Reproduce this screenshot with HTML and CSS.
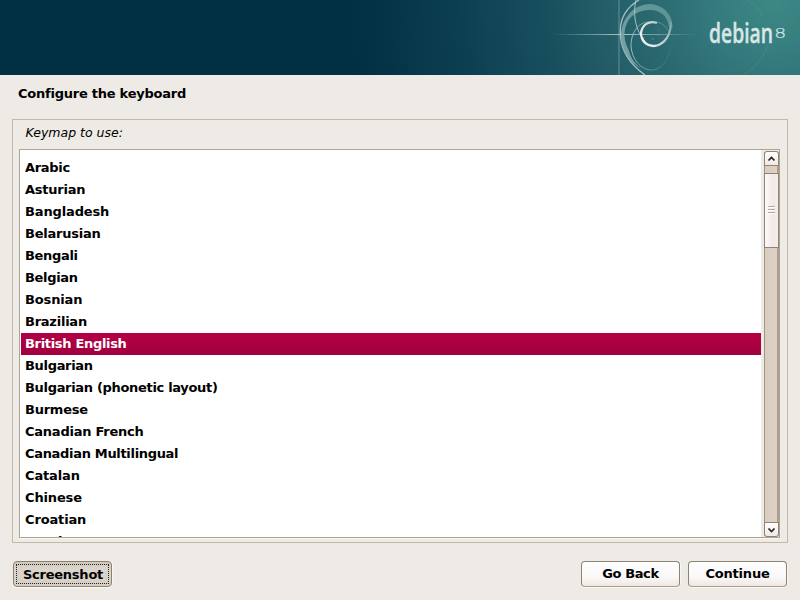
FILE: index.html
```
<!DOCTYPE html>
<html lang="en">
<head>
<meta charset="utf-8">
<title>Configure the keyboard</title>
<link rel="stylesheet" href="styles.css">
</head>
<body>
<header class="banner">
<svg class="art" width="800" height="75" viewBox="0 0 800 75" fill="none">
<defs>
<linearGradient id="beam" x1="552" x2="698" y1="0" y2="0" gradientUnits="userSpaceOnUse"><stop offset="0" stop-color="#b8d0d2" stop-opacity="0"/><stop offset=".48" stop-color="#c5d9da" stop-opacity=".85"/><stop offset="1" stop-color="#b8d0d2" stop-opacity="0"/></linearGradient>
<linearGradient id="ring" x1="620" x2="672" y1="60" y2="10" gradientUnits="userSpaceOnUse"><stop offset="0" stop-color="#83abb0"/><stop offset="1" stop-color="#5f9798"/></linearGradient>
<linearGradient id="fade" x1="630" x2="672" y1="0" y2="0" gradientUnits="userSpaceOnUse"><stop offset="0" stop-color="#9dbfc1"/><stop offset="1" stop-color="#5d9292" stop-opacity=".2"/></linearGradient>
<linearGradient id="core" x1="641" x2="672" y1="40" y2="22" gradientUnits="userSpaceOnUse"><stop offset="0" stop-color="#eef2f0"/><stop offset=".5" stop-color="#c3d5d5"/><stop offset="1" stop-color="#6fa0a2"/></linearGradient>
</defs>
<path d="M619 0V75" stroke="#6f979c" stroke-opacity=".55" stroke-width="1.6"/>
<rect x="552" y="34" width="146" height="1" fill="url(#beam)"/>
<path d="M639 0C624 9 619 21 620.500 36C621.500 52 631 65 645 75" stroke="#a4c1c5" stroke-width="1.300"/>
<path d="M621 34C622 18 634 4 650 4C664 5 673 15 672.500 28L669 27C668 16 660 9 648 10C633 11 626 20 624.500 32C624 41 627 46 629 51C631 59 636 65 642 69C629 63 620 49 621 34Z" fill="url(#ring)" fill-opacity=".9"/>
<path d="M636 0C633 13 635 26 641 36" stroke="#a4c1c5" stroke-width="1"/>
<path d="M649 22C638 22 631 33 631 46C632 60 641 69 650 70C660 71 667 62 670 50" stroke="url(#fade)" stroke-width="1"/>
<path d="M650 22C659 20 667 26 670 34" stroke="#77a6a7" stroke-width="1" stroke-opacity=".65"/>
<path d="M657 23C649 20 642 25 641 33C641 42 648 47 655 46C665 44 671 35 671 22" stroke="url(#core)" stroke-width="2.200"/>
<path d="M642 37C644 43 649 46.500 656 45.500" stroke="#e6ecea" stroke-width="1.700"/>
<path d="M657 35h2M653 38v2M658 30h1" stroke="#719fa1" stroke-opacity=".7"/>
<path d="M747 0Q758 6 763 17M768 45Q761 65 743 75" stroke="#579292" stroke-opacity=".5"/>
<text class="brand" x="709" y="43" textLength="64" lengthAdjust="spacingAndGlyphs">debian</text>
<text class="release" x="774.300" y="38" textLength="12" lengthAdjust="spacingAndGlyphs">8</text>
</svg>
</header>
<main>
<h1>Configure the keyboard</h1>
<section class="frame">
<p class="prompt">Keymap to use:</p>
<div class="listbox">
<ul class="items">
<li class="tight">Arabic</li>
<li>Asturian</li>
<li class="loose">Bangladesh</li>
<li>Belarusian</li>
<li class="tight">Bengali</li>
<li class="tight">Belgian</li>
<li class="loose">Bosnian</li>
<li>Brazilian</li>
<li class="tight selected">British English</li>
<li class="tight">Bulgarian</li>
<li class="tight">Bulgarian (phonetic layout)</li>
<li>Burmese</li>
<li>Canadian French</li>
<li class="tight">Canadian Multilingual</li>
<li class="loose">Catalan</li>
<li class="loose">Chinese</li>
<li class="loose">Croatian</li>
<li class="loose">Czech</li>
</ul>
<div class="scrollbar">
<div class="step up"><svg width="9" height="6" viewBox="0 0 9 6"><path d="M1.500 4.500l3-3 3 3" fill="none" stroke="#222" stroke-width="1.700"/></svg></div>
<div class="thumb"><i></i><i></i><i></i></div>
<div class="step down"><svg width="9" height="6" viewBox="0 0 9 6"><path d="M1.500 1.500l3 3 3-3" fill="none" stroke="#222" stroke-width="1.700"/></svg></div>
</div>
</div>
</section>
<footer>
<button class="btn shot"><span>Screenshot</span></button>
<button class="btn tight">Go Back</button>
<button class="btn loose">Continue</button>
</footer>
</main>
</body>
</html>
```
FILE: styles.css
```
* { box-sizing: border-box; }
body {
  margin: 0;
  width: 800px;
  height: 600px;
  overflow: hidden;
  background: #eeebe6;
  color: #000;
  font: bold 13px "DejaVu Sans", sans-serif;
}
.banner {
  height: 75px;
  background: radial-gradient(circle at 775px 0, #3c8985 0, #357b7e 60px, #2b6a71 120px, #235b66 180px, #174e5d 235px, #0d4053 310px, #053448 390px, #003042 425px);
}
.art { display: block; }
.brand {
  font: 600 27px "Open Sans", sans-serif;
  fill: #d9e6e6;
  stroke: #d9e6e6;
  stroke-width: .4px;
}
.release {
  font: 200 14px "DejaVu Sans", sans-serif;
  fill: #d8e8e8;
  stroke: #d8e8e8;
  stroke-width: .2px;
}
main { padding: 0 12px; }
h1 {
  margin: 0;
  height: 44px;
  padding: 11px 6px 0;
  font-size: 13px;
  line-height: 16px;
  letter-spacing: -.24px;
}
.frame {
  height: 424px;
  border: 1px solid #c4b8a9;
  padding: 5px 7px 0 6px;
}
.prompt {
  margin: 0;
  height: 24px;
  padding-left: 6.5px;
  font-weight: normal;
  font-style: italic;
  font-size: 12.5px;
  line-height: 16px;
}
.listbox {
  display: flex;
  width: 761px;
  height: 389px;
  border: 1px solid #aea496;
  box-shadow: 0 1px 0 #f9f7f4;
  background: #eeebe6;
}
.items {
  flex: none;
  width: 741px;
  height: 387px;
  margin: 0;
  padding: 7px 0 0 1px;
  overflow: hidden;
  list-style: none;
  background: #fff;
  letter-spacing: -.24px;
}
.items li {
  height: 22px;
  padding-left: 4px;
  line-height: 21px;
  white-space: nowrap;
}
.tight { letter-spacing: -.32px; }
.loose { letter-spacing: -.14px; }
.selected {
  color: #fff;
  background: linear-gradient(#b50045, #a0003f);
}
.scrollbar {
  display: flex;
  flex-direction: column;
  width: 15px;
  height: 386px;
  margin: 1px 0 0 3px;
  border-radius: 3px;
  background: linear-gradient(90deg, #a0937f 1px, #d8cdbf 1px, #ddd2c6 13px, #ac9d8c 13px);
}
.step {
  display: flex;
  align-items: center;
  justify-content: center;
  height: 15px;
  border: 1px solid #8f8471;
  background: linear-gradient(#fff, #eeeae5);
}
.up { border-radius: 3px 3px 0 0; }
.down { margin-top: auto; border-radius: 0 0 3px 3px; }
.thumb {
  display: flex;
  flex-direction: column;
  align-items: center;
  justify-content: center;
  gap: 1px;
  height: 75px;
  margin-top: 7px;
  padding-bottom: 2px;
  border: 1px solid #8f8471;
  background: linear-gradient(90deg, #fcfafa, #efe8e6 60%, #f3efec);
}
.thumb i {
  width: 7px;
  height: 2px;
  border-top: 1px solid #b5aa96;
  background: #fff;
}
footer {
  display: flex;
  gap: 8px;
  padding: 18px 1px 0;
}
.btn {
  width: 99px;
  height: 26px;
  padding: 0 0 1px;
  border: 1px solid #8f8370;
  border-bottom-color: #b09b88;
  border-radius: 4px;
  box-shadow: 0 1px 0 #faf8f5, 1px 0 0 #f8f6f2;
  background: linear-gradient(#fff, #faf7f7 65%, #eee8e3);
  color: #000;
  font: inherit;
}
.btn.tight { letter-spacing: -.4px; }
.btn.loose { letter-spacing: -.2px; }
.shot {
  margin-right: auto;
  padding: 2px;
  border-color: #8f8370;
  background: linear-gradient(#cec8bc, #dbd5cb 30%, #d5cec6);
  letter-spacing: -.24px;
}
.shot span {
  display: block;
  height: 20px;
  padding-left: 1px;
  border: 1px dotted #222;
  line-height: 19px;
}
```
